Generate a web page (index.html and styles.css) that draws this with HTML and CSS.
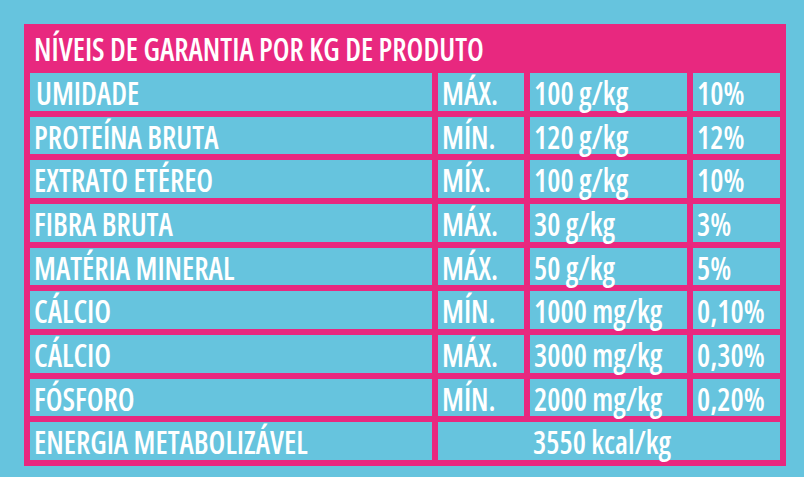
FILE: index.html
```html
<!DOCTYPE html>
<html lang="pt">
<head>
<meta charset="utf-8">
<title>Níveis de garantia</title>
<link rel="stylesheet" href="styles.css">
</head>
<body>
<div class="panel">
  <div class="title"><span class="t">NÍVEIS DE GARANTIA POR KG DE PRODUTO</span></div>
  <div class="grid">
    <div class="cell first"><span class="t">UMIDADE</span></div>
    <div class="cell"><span class="t">MÁX.</span></div>
    <div class="cell"><span class="t">100 g/kg</span></div>
    <div class="cell"><span class="t">10%</span></div>

    <div class="cell"><span class="t">PROTEÍNA BRUTA</span></div>
    <div class="cell"><span class="t">MÍN.</span></div>
    <div class="cell"><span class="t">120 g/kg</span></div>
    <div class="cell"><span class="t">12%</span></div>

    <div class="cell"><span class="t">EXTRATO ETÉREO</span></div>
    <div class="cell"><span class="t">MÍX.</span></div>
    <div class="cell"><span class="t">100 g/kg</span></div>
    <div class="cell"><span class="t">10%</span></div>

    <div class="cell"><span class="t">FIBRA BRUTA</span></div>
    <div class="cell"><span class="t">MÁX.</span></div>
    <div class="cell"><span class="t">30 g/kg</span></div>
    <div class="cell"><span class="t">3%</span></div>

    <div class="cell"><span class="t">MATÉRIA MINERAL</span></div>
    <div class="cell"><span class="t">MÁX.</span></div>
    <div class="cell"><span class="t">50 g/kg</span></div>
    <div class="cell"><span class="t">5%</span></div>

    <div class="cell"><span class="t">CÁLCIO</span></div>
    <div class="cell"><span class="t">MÍN.</span></div>
    <div class="cell"><span class="t">1000 mg/kg</span></div>
    <div class="cell"><span class="t">0,10%</span></div>

    <div class="cell"><span class="t">CÁLCIO</span></div>
    <div class="cell"><span class="t">MÁX.</span></div>
    <div class="cell"><span class="t">3000 mg/kg</span></div>
    <div class="cell"><span class="t">0,30%</span></div>

    <div class="cell"><span class="t">FÓSFORO</span></div>
    <div class="cell"><span class="t">MÍN.</span></div>
    <div class="cell"><span class="t">2000 mg/kg</span></div>
    <div class="cell"><span class="t">0,20%</span></div>

    <div class="cell"><span class="t">ENERGIA METABOLIZÁVEL</span></div>
    <div class="cell span"><span class="t">3550 kcal/kg</span></div>
  </div>
</div>
</body>
</html>
```
FILE: styles.css
```css
html, body {
  margin: 0;
  padding: 0;
}
body {
  background: #66c4de;
  width: 804px;
  height: 477px;
  overflow: hidden;
  font-family: "Open Sans", "Liberation Sans", sans-serif;
  font-stretch: 75%;
  font-weight: 600;
  color: #ffffff;
}
.panel {
  margin: 24px 0 0 24px;
  width: 750px;
  background: #e8287f;
  padding: 0 6px 6px 6px;
}
.title {
  height: 49px;
  font-size: 33px;
  line-height: 50px;
  padding-left: 4px;
  white-space: nowrap;
}
.grid {
  display: grid;
  grid-template-columns: 402px 86px 157px 87px;
  grid-template-rows: repeat(9, minmax(0, 1fr));
  height: 387px;
  gap: 6px;
}
.cell {
  background: #66c4de;
  font-size: 33px;
  line-height: 39px;
  height: 100%;
  min-height: 0;
  padding-left: 4px;
  white-space: nowrap;
}
.first {
  padding-left: 6px;
}
.span {
  grid-column: 2 / 5;
  padding-left: 95px;
}
.t {
  display: inline-block;
  transform: scaleX(0.895);
  transform-origin: left center;
}
```
